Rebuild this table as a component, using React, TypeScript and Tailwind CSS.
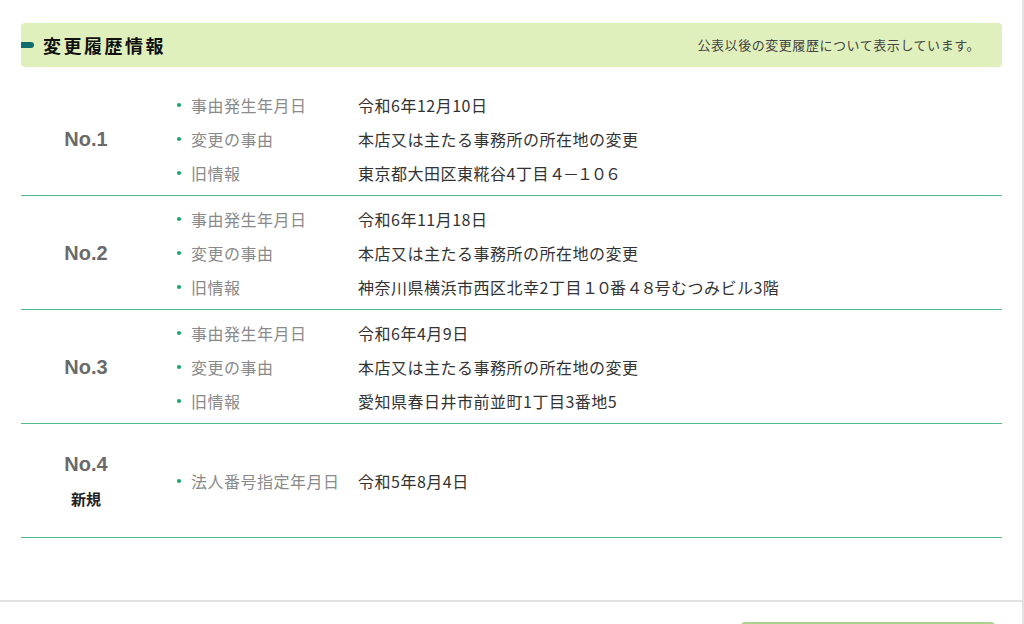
import React from 'react';

type Item = { label: string; value: React.ReactNode };

type HistoryEntry = {
  no: string;
  isNew?: boolean;
  items: Item[];
};

// full-width digits are set a little tighter, as in the source page
function Wide({ children }: { children: React.ReactNode }) {
  return <span className="tracking-[-2px]">{children}</span>;
}

const entries: HistoryEntry[] = [
  {
    no: 'No.1',
    items: [
      { label: '事由発生年月日', value: '令和6年12月10日' },
      { label: '変更の事由', value: '本店又は主たる事務所の所在地の変更' },
      {
        label: '旧情報',
        value: (
          <>
            東京都大田区東糀谷4丁目<Wide>４－１０６</Wide>
          </>
        ),
      },
    ],
  },
  {
    no: 'No.2',
    items: [
      { label: '事由発生年月日', value: '令和6年11月18日' },
      { label: '変更の事由', value: '本店又は主たる事務所の所在地の変更' },
      {
        label: '旧情報',
        value: (
          <>
            神奈川県横浜市西区北幸2丁目<Wide>１０</Wide>番<Wide>４８</Wide>号むつみビル3階
          </>
        ),
      },
    ],
  },
  {
    no: 'No.3',
    items: [
      { label: '事由発生年月日', value: '令和6年4月9日' },
      { label: '変更の事由', value: '本店又は主たる事務所の所在地の変更' },
      { label: '旧情報', value: '愛知県春日井市前並町1丁目3番地5' },
    ],
  },
  {
    no: 'No.4',
    isNew: true,
    items: [{ label: '法人番号指定年月日', value: '令和5年8月4日' }],
  },
];

const jp = "font-['Noto_Sans_CJK_JP','Noto_Sans',sans-serif]";

function HistoryRow({ entry }: { entry: HistoryEntry }) {
  return (
    <div>
      <div className="flex h-[113px] items-center">
        {/* No. */}
        <div className="flex w-[130px] shrink-0 flex-col items-center justify-center">
          <span className="font-['Liberation_Sans',Arial,sans-serif] text-[20px] font-bold leading-[26px] text-[#6a6a6a]">
            {entry.no}
          </span>
          {entry.isNew && (
            <span className={`${jp} mt-[11px] text-[15px] font-bold leading-[22px] text-[#222]`}>
              新規
            </span>
          )}
        </div>

        {/* Items */}
        <ul className="flex flex-col">
          {entry.items.map((item) => (
            <li key={item.label} className={`${jp} flex h-[34px] items-center text-[16px] tracking-[0.5px]`}>
              <span className="flex w-[40px] shrink-0 justify-end pr-[10px]">
                <span className="h-[4px] w-[4px] rounded-full bg-[#12a866]" />
              </span>
              <span className="w-[167px] shrink-0 text-[#8a8a8a]">{item.label}</span>
              <span className="text-[#333]">{item.value}</span>
            </li>
          ))}
        </ul>
      </div>
      <div className="h-px bg-[#4dbb8b]" />
    </div>
  );
}

export default function App() {
  return (
    <div className="h-[624px] w-[1024px] overflow-hidden bg-white">
      <section className="h-[602px] border-r-2 border-b-2 border-[#e2e2e2] pt-[23px] pr-[20px] pl-[21px]">
        {/* Header */}
        <div className="flex h-[44px] items-center justify-between rounded-[4px] bg-[#e0f0bc] pr-[22px]">
          <div className="flex items-center">
            <span className="h-[6px] w-[13px] rounded-r-full bg-[#136c6c]" />
            <h2 className={`${jp} ml-[9px] text-[18px] font-bold tracking-[2.5px] text-[#111]`}>
              変更履歴情報
            </h2>
          </div>
          <p className={`${jp} text-[13px] tracking-[0.55px] text-[#444]`}>
            公表以後の変更履歴について表示しています。
          </p>
        </div>

        {/* Rows */}
        <div className="mt-[15px]">
          {entries.map((entry) => (
            <HistoryRow key={entry.no} entry={entry} />
          ))}
        </div>
      </section>

      <div className="flex h-[22px] justify-end border-r-2 border-[#e2e2e2] pr-[27px]">
        <div className="mt-[20px] h-[10px] w-[254px] rounded-t-[4px] bg-[#a9d18b]" />
      </div>
    </div>
  );
}
